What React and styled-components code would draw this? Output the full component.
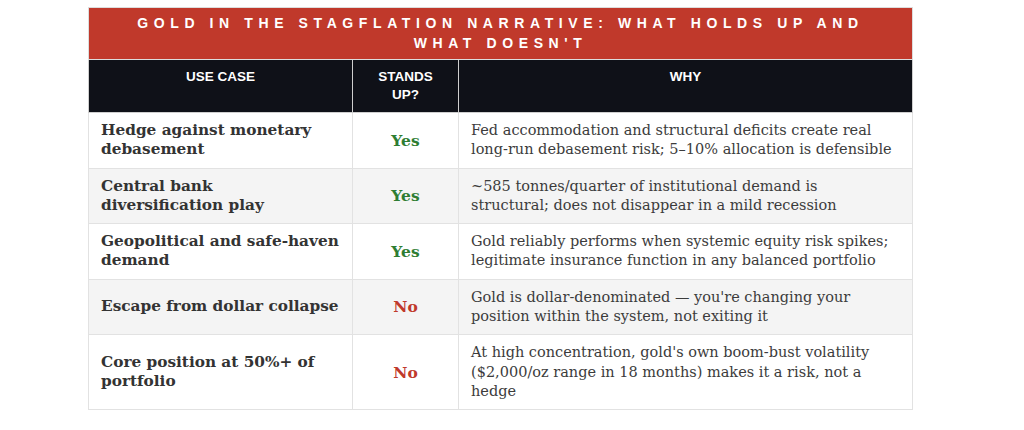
import React from "react";
import styled, { createGlobalStyle } from "styled-components";

const Global = createGlobalStyle`
  html, body { margin: 0; padding: 0; background: #ffffff; }
  body { font-family: "DejaVu Serif", Georgia, serif; }
`;

const Wrap = styled.div`
  padding: 7px 0 0 88px;
`;

const Table = styled.table`
  width: 824px;
  border-collapse: collapse;
  border: 1px solid #dddddd;
  table-layout: fixed;
`;

const Col = styled.col`
  width: ${(p) => p.$w};
`;

const TitleCell = styled.th`
  background: #c0392b;
  color: #ffffff;
  font-family: "Liberation Sans", Arial, sans-serif;
  font-weight: 700;
  font-size: 14px;
  line-height: 20px;
  letter-spacing: 5.6px;
  text-transform: uppercase;
  padding: 5px 24px 6px;
  text-align: center;
  border: 1px solid #dddddd;
`;

const HeadCell = styled.th`
  background: #0f1118;
  color: #ffffff;
  font-family: "Liberation Sans", Arial, sans-serif;
  font-weight: 700;
  font-size: 13.5px;
  line-height: 18px;
  padding: 8px 12px;
  text-align: center;
  vertical-align: top;
  border: 1px solid #cfcfcf;
  border-top: none;
`;

const Row = styled.tr`
  background: ${(p) => (p.$alt ? "#f4f4f4" : "#ffffff")};
`;

const Cell = styled.td`
  border: 1px solid #e2e2e2;
  padding: 8px 14px 8px 12px;
  vertical-align: middle;
  font-size: 14.5px;
  line-height: 19.3px;
  color: #333333;
`;

const CaseCell = styled(Cell)`
  font-weight: 700;
  font-size: 15.3px;
  padding-right: 8px;
  white-space: pre-line;
  color: #333333;
`;

const VerdictCell = styled(Cell)`
  text-align: center;
  font-weight: 700;
  font-size: 15.5px;
  padding-right: 12px;
  color: ${(p) => (p.$ok ? "#2e7d32" : "#c0392b")};
`;

const WhyCell = styled(Cell)`
  color: #3c3c3c;
`;

const rows = [
  {
    use: "Hedge against monetary debasement",
    ok: true,
    why: "Fed accommodation and structural deficits create real long-run debasement risk; 5–10% allocation is defensible",
  },
  {
    use: "Central bank\ndiversification play",
    ok: true,
    why: "~585 tonnes/quarter of institutional demand is structural; does not disappear in a mild recession",
  },
  {
    use: "Geopolitical and safe-haven demand",
    ok: true,
    why: "Gold reliably performs when systemic equity risk spikes; legitimate insurance function in any balanced portfolio",
  },
  {
    use: "Escape from dollar collapse",
    ok: false,
    why: "Gold is dollar-denominated — you're changing your position within the system, not exiting it",
  },
  {
    use: "Core position at 50%+ of portfolio",
    ok: false,
    why: "At high concentration, gold's own boom-bust volatility ($2,000/oz range in 18 months) makes it a risk, not a hedge",
  },
];

export default function App() {
  return (
    <>
      <Global />
      <Wrap>
        <Table>
          <colgroup>
            <Col $w="264px" />
            <Col $w="106px" />
            <Col $w="454px" />
          </colgroup>
          <thead>
            <tr>
              <TitleCell colSpan={3}>
                Gold in the Stagflation Narrative: What Holds Up and What Doesn't
              </TitleCell>
            </tr>
            <tr>
              <HeadCell>USE CASE</HeadCell>
              <HeadCell>
                STANDS
                <br />
                UP?
              </HeadCell>
              <HeadCell>WHY</HeadCell>
            </tr>
          </thead>
          <tbody>
            {rows.map((r, i) => (
              <Row key={i} $alt={i % 2 === 1}>
                <CaseCell>{r.use}</CaseCell>
                <VerdictCell $ok={r.ok}>{r.ok ? "Yes" : "No"}</VerdictCell>
                <WhyCell>{r.why}</WhyCell>
              </Row>
            ))}
          </tbody>
        </Table>
      </Wrap>
    </>
  );
}
